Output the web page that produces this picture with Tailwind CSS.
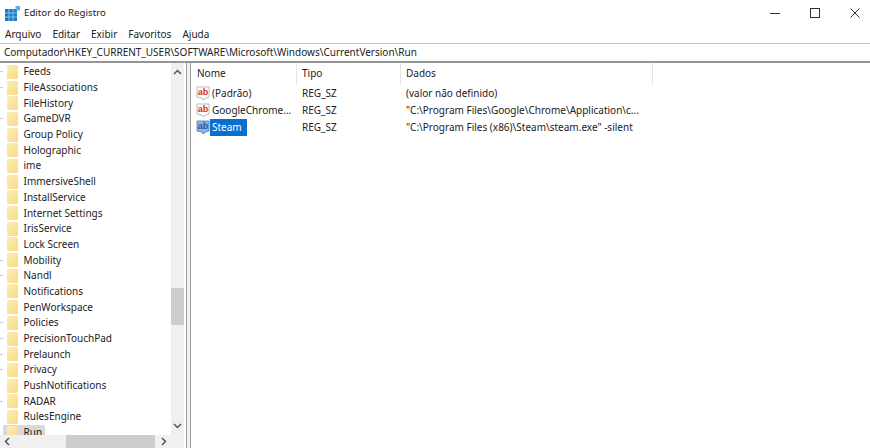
<!DOCTYPE html>
<html><head><meta charset="utf-8"><script src="https://cdn.jsdelivr.net/npm/@tailwindcss/browser@4"></script></head>
<body class="m-0 bg-white">
<div class="w-[870px] h-[448px] overflow-hidden flex flex-col bg-white text-[#222] font-['Noto_Sans',sans-serif] text-[10px]">
  <div class="h-[26px] flex items-center shrink-0">
    <svg class="ml-[5px] w-[15px] h-[15px]" viewBox="0 0 15 15"><rect x="0" y="3" width="12" height="12" fill="#1f78c1"/><path d="M4 3v12M8 3v12M0 7h12M0 11h12" stroke="#9fd0f0" stroke-width=".8"/><rect x="10.5" y="0" width="4.5" height="4.5" fill="#58b0e6"/></svg>
    <span class="ml-[4px] mt-[1px] text-[9.7px]">Editor do Registro</span>
    <div class="ml-auto mr-[10px] mb-[1px] flex items-center gap-[30px]">
      <svg class="w-[10px] h-[10px]" viewBox="0 0 10 10"><path d="M0 5.5h10" stroke="#333"/></svg>
      <svg class="w-[10px] h-[10px]" viewBox="0 0 10 10"><rect x=".5" y=".5" width="9" height="9" fill="none" stroke="#333"/></svg>
      <svg class="w-[10px] h-[10px]" viewBox="0 0 10 10"><path d="M.5.5l9 9M9.5.5l-9 9" stroke="#333" fill="none"/></svg>
    </div>
  </div>
  <div class="h-[17px] flex items-center shrink-0 gap-[11px] pl-[5px]"><span>Arquivo</span><span>Editar</span><span>Exibir</span><span>Favoritos</span><span>Ajuda</span></div>
  <div class="h-[20px] shrink-0 border-t border-[#c4c4c4] border-b-2 border-b-[#969696] flex items-center pl-[4px] whitespace-nowrap">Computador\HKEY_CURRENT_USER\SOFTWARE\Microsoft\Windows\CurrentVersion\Run</div>
  <div class="flex-1 flex min-h-0">
    <div class="w-[184px] shrink-0 flex flex-col">
      <div class="flex-1 flex min-h-0">
        <div class="w-[171px] overflow-hidden pt-[1px]">
          <div class="h-[15.7px] flex items-center whitespace-nowrap"><span class="w-[3px] h-px bg-[#ccc] mr-[4px]"></span><span class="w-[11px] h-[14px] rounded-[1px] bg-gradient-to-br from-[#fdeebb] to-[#fbd97e] mr-[5.5px]"></span>Feeds</div>
          <div class="h-[15.7px] flex items-center whitespace-nowrap"><span class="w-[3px] h-px bg-[#ccc] mr-[4px]"></span><span class="w-[11px] h-[14px] rounded-[1px] bg-gradient-to-br from-[#fdeebb] to-[#fbd97e] mr-[5.5px]"></span>FileAssociations</div>
          <div class="h-[15.7px] flex items-center whitespace-nowrap"><span class="w-[3px] h-px mr-[4px]"></span><span class="w-[11px] h-[14px] rounded-[1px] bg-gradient-to-br from-[#fdeebb] to-[#fbd97e] mr-[5.5px]"></span>FileHistory</div>
          <div class="h-[15.7px] flex items-center whitespace-nowrap"><span class="w-[3px] h-px bg-[#ccc] mr-[4px]"></span><span class="w-[11px] h-[14px] rounded-[1px] bg-gradient-to-br from-[#fdeebb] to-[#fbd97e] mr-[5.5px]"></span>GameDVR</div>
          <div class="h-[15.7px] flex items-center whitespace-nowrap"><span class="w-[3px] h-px mr-[4px]"></span><span class="w-[11px] h-[14px] rounded-[1px] bg-gradient-to-br from-[#fdeebb] to-[#fbd97e] mr-[5.5px]"></span>Group Policy</div>
          <div class="h-[15.7px] flex items-center whitespace-nowrap"><span class="w-[3px] h-px mr-[4px]"></span><span class="w-[11px] h-[14px] rounded-[1px] bg-gradient-to-br from-[#fdeebb] to-[#fbd97e] mr-[5.5px]"></span>Holographic</div>
          <div class="h-[15.7px] flex items-center whitespace-nowrap"><span class="w-[3px] h-px mr-[4px]"></span><span class="w-[11px] h-[14px] rounded-[1px] bg-gradient-to-br from-[#fdeebb] to-[#fbd97e] mr-[5.5px]"></span>ime</div>
          <div class="h-[15.7px] flex items-center whitespace-nowrap"><span class="w-[3px] h-px mr-[4px]"></span><span class="w-[11px] h-[14px] rounded-[1px] bg-gradient-to-br from-[#fdeebb] to-[#fbd97e] mr-[5.5px]"></span>ImmersiveShell</div>
          <div class="h-[15.7px] flex items-center whitespace-nowrap"><span class="w-[3px] h-px mr-[4px]"></span><span class="w-[11px] h-[14px] rounded-[1px] bg-gradient-to-br from-[#fdeebb] to-[#fbd97e] mr-[5.5px]"></span>InstallService</div>
          <div class="h-[15.7px] flex items-center whitespace-nowrap"><span class="w-[3px] h-px mr-[4px]"></span><span class="w-[11px] h-[14px] rounded-[1px] bg-gradient-to-br from-[#fdeebb] to-[#fbd97e] mr-[5.5px]"></span>Internet Settings</div>
          <div class="h-[15.7px] flex items-center whitespace-nowrap"><span class="w-[3px] h-px mr-[4px]"></span><span class="w-[11px] h-[14px] rounded-[1px] bg-gradient-to-br from-[#fdeebb] to-[#fbd97e] mr-[5.5px]"></span>IrisService</div>
          <div class="h-[15.7px] flex items-center whitespace-nowrap"><span class="w-[3px] h-px mr-[4px]"></span><span class="w-[11px] h-[14px] rounded-[1px] bg-gradient-to-br from-[#fdeebb] to-[#fbd97e] mr-[5.5px]"></span>Lock Screen</div>
          <div class="h-[15.7px] flex items-center whitespace-nowrap"><span class="w-[3px] h-px bg-[#ccc] mr-[4px]"></span><span class="w-[11px] h-[14px] rounded-[1px] bg-gradient-to-br from-[#fdeebb] to-[#fbd97e] mr-[5.5px]"></span>Mobility</div>
          <div class="h-[15.7px] flex items-center whitespace-nowrap"><span class="w-[3px] h-px bg-[#ccc] mr-[4px]"></span><span class="w-[11px] h-[14px] rounded-[1px] bg-gradient-to-br from-[#fdeebb] to-[#fbd97e] mr-[5.5px]"></span>Nandl</div>
          <div class="h-[15.7px] flex items-center whitespace-nowrap"><span class="w-[3px] h-px mr-[4px]"></span><span class="w-[11px] h-[14px] rounded-[1px] bg-gradient-to-br from-[#fdeebb] to-[#fbd97e] mr-[5.5px]"></span>Notifications</div>
          <div class="h-[15.7px] flex items-center whitespace-nowrap"><span class="w-[3px] h-px mr-[4px]"></span><span class="w-[11px] h-[14px] rounded-[1px] bg-gradient-to-br from-[#fdeebb] to-[#fbd97e] mr-[5.5px]"></span>PenWorkspace</div>
          <div class="h-[15.7px] flex items-center whitespace-nowrap"><span class="w-[3px] h-px bg-[#ccc] mr-[4px]"></span><span class="w-[11px] h-[14px] rounded-[1px] bg-gradient-to-br from-[#fdeebb] to-[#fbd97e] mr-[5.5px]"></span>Policies</div>
          <div class="h-[15.7px] flex items-center whitespace-nowrap"><span class="w-[3px] h-px bg-[#ccc] mr-[4px]"></span><span class="w-[11px] h-[14px] rounded-[1px] bg-gradient-to-br from-[#fdeebb] to-[#fbd97e] mr-[5.5px]"></span>PrecisionTouchPad</div>
          <div class="h-[15.7px] flex items-center whitespace-nowrap"><span class="w-[3px] h-px bg-[#ccc] mr-[4px]"></span><span class="w-[11px] h-[14px] rounded-[1px] bg-gradient-to-br from-[#fdeebb] to-[#fbd97e] mr-[5.5px]"></span>Prelaunch</div>
          <div class="h-[15.7px] flex items-center whitespace-nowrap"><span class="w-[3px] h-px bg-[#ccc] mr-[4px]"></span><span class="w-[11px] h-[14px] rounded-[1px] bg-gradient-to-br from-[#fdeebb] to-[#fbd97e] mr-[5.5px]"></span>Privacy</div>
          <div class="h-[15.7px] flex items-center whitespace-nowrap"><span class="w-[3px] h-px mr-[4px]"></span><span class="w-[11px] h-[14px] rounded-[1px] bg-gradient-to-br from-[#fdeebb] to-[#fbd97e] mr-[5.5px]"></span>PushNotifications</div>
          <div class="h-[15.7px] flex items-center whitespace-nowrap"><span class="w-[3px] h-px bg-[#ccc] mr-[4px]"></span><span class="w-[11px] h-[14px] rounded-[1px] bg-gradient-to-br from-[#fdeebb] to-[#fbd97e] mr-[5.5px]"></span>RADAR</div>
          <div class="h-[15.7px] flex items-center whitespace-nowrap"><span class="w-[3px] h-px mr-[4px]"></span><span class="w-[11px] h-[14px] rounded-[1px] bg-gradient-to-br from-[#fdeebb] to-[#fbd97e] mr-[5.5px]"></span>RulesEngine</div>
          <div class="h-[15.7px] flex items-center whitespace-nowrap"><span class="w-[3px]"></span><span class="flex items-center bg-[#d9d9d9] pl-[4px] pr-[3px]"><span class="w-[11px] h-[14px] rounded-[1px] bg-gradient-to-br from-[#fdeebb] to-[#fbd97e] mr-[5.5px]"></span>Run</span></div>
        </div>
        <div class="w-[13px] bg-[#f0f0f0] flex flex-col items-center relative">
          <svg class="mt-[6px] w-[9px] h-[6px]" viewBox="0 0 9 6"><path d="M1 5l3.5-3.5L8 5" stroke="#555" stroke-width="1.5" fill="none"/></svg>
          <div class="absolute top-[225px] h-[37px] w-[13px] bg-[#cdcdcd]"></div>
          <svg class="mt-auto mb-[6px] w-[9px] h-[6px]" viewBox="0 0 9 6"><path d="M1 1l3.5 3.5L8 1" stroke="#555" stroke-width="1.5" fill="none"/></svg>
        </div>
      </div>
      <div class="h-[13px] shrink-0 bg-[#f0f0f0] flex items-center relative">
        <div class="absolute left-[66px] w-[89px] h-[13px] bg-[#cdcdcd]"></div>
        <svg class="absolute left-[4px] w-[6px] h-[9px]" viewBox="0 0 6 9"><path d="M5 1L1.5 4.5 5 8" stroke="#555" stroke-width="1.5" fill="none"/></svg>
        <svg class="absolute left-[161px] w-[6px] h-[9px]" viewBox="0 0 6 9"><path d="M1 1l3.5 3.5L1 8" stroke="#555" stroke-width="1.5" fill="none"/></svg>
      </div>
    </div>
    <div class="w-[5px] ml-[2px] shrink-0 bg-[#f0f0f0] border-x border-x-[#a0a0a0]"></div>
    <div class="flex-1 min-w-0">
      <div class="flex h-[21.5px] items-center">
        <div class="w-[106px] pl-[6px] border-r border-[#e5e5e5] h-full flex items-center">Nome</div>
        <div class="w-[104px] pl-[5px] border-r border-[#e5e5e5] h-full flex items-center">Tipo</div>
        <div class="w-[252px] pl-[5px] border-r border-[#e5e5e5] h-full flex items-center">Dados</div>
      </div>
      <div class="flex h-[17px] items-center whitespace-nowrap"><div class="w-[106px] flex items-center pl-[5px]"><svg class="w-[14px] h-[15px] mr-[2px] shrink-0" viewBox="0 0 14 15"><path d="M1 1h12v10l-3 1-3 2-1-2-5-1z" fill="#fff" stroke="#bbb"/><text x="7" y="9" text-anchor="middle" font-size="9" font-weight="700" font-family="Liberation Sans" fill="#d1341a">ab</text></svg>(Padrão)</div><div class="w-[104px] pl-[5px]">REG_SZ</div><div class="pl-[5px]">(valor não definido)</div></div>
      <div class="flex h-[17px] items-center whitespace-nowrap"><div class="w-[106px] flex items-center pl-[5px]"><svg class="w-[14px] h-[15px] mr-[2px] shrink-0" viewBox="0 0 14 15"><path d="M1 1h12v10l-3 1-3 2-1-2-5-1z" fill="#fff" stroke="#bbb"/><text x="7" y="9" text-anchor="middle" font-size="9" font-weight="700" font-family="Liberation Sans" fill="#d1341a">ab</text></svg>GoogleChrome...</div><div class="w-[104px] pl-[5px]">REG_SZ</div><div class="pl-[5px]">"C:\Program Files\Google\Chrome\Application\c...</div></div>
      <div class="flex h-[17px] items-center whitespace-nowrap"><div class="w-[106px] flex items-center pl-[5px]"><svg class="w-[14px] h-[15px] shrink-0" viewBox="0 0 14 15"><path d="M1 1h12v10l-3 1-3 2-1-2-5-1z" fill="#8db3de" stroke="#5f8fc9"/><text x="7" y="9" text-anchor="middle" font-size="9" font-weight="700" font-family="Liberation Sans" fill="#2a5a96">ab</text></svg><span class="bg-[#0a6fd1] text-white pl-[2px] pr-[5px] h-[17px] flex items-center">Steam</span></div><div class="w-[104px] pl-[5px]">REG_SZ</div><div class="pl-[5px]">"C:\Program Files (x86)\Steam\steam.exe" -silent</div></div>
    </div>
  </div>
</div>
</body></html>
